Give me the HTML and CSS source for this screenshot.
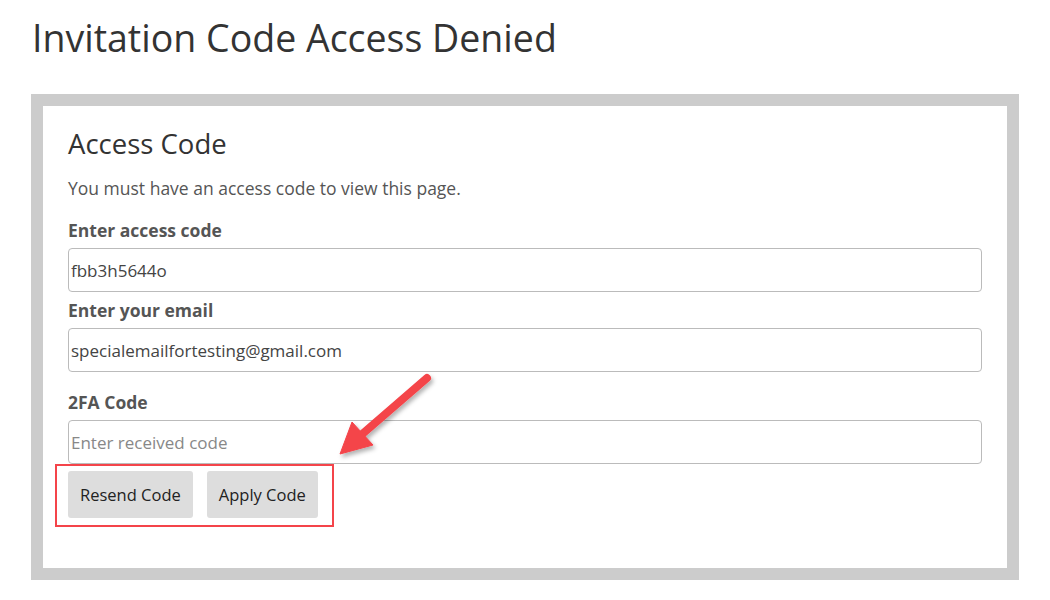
FILE: index.html
```html
<!DOCTYPE html>
<html>
<head>
  <meta charset="utf-8">
  <title>Invitation Code Access Denied</title>
  <link rel="stylesheet" href="styles.css">
</head>
<body>
  <h1 class="page-title">Invitation Code Access Denied</h1>

  <div class="access-box">
    <h2 class="box-title">Access Code</h2>
    <p class="box-note">You must have an access code to view this page.</p>

    <form class="access-form" onsubmit="return false;">
      <label class="field-label" for="code">Enter access code</label>
      <input class="field-input" type="text" id="code" value="fbb3h5644o">

      <label class="field-label" for="email">Enter your email</label>
      <input class="field-input" type="text" id="email" value="specialemailfortesting@gmail.com">

      <label class="field-label label-2fa" for="twofa">2FA Code</label>
      <input class="field-input" type="text" id="twofa" placeholder="Enter received code">

      <div class="button-row">
        <button type="button" class="btn">Resend Code</button>
        <button type="submit" class="btn">Apply Code</button>
      </div>
    </form>
  </div>

  <!-- annotation overlay -->
  <div class="mark-box"></div>
  <svg class="mark-arrow" width="120" height="110" viewBox="0 0 120 110">
    <defs>
      <filter id="shadow" x="-20%" y="-20%" width="140%" height="140%">
        <feDropShadow dx="2" dy="3" stdDeviation="2" flood-color="#000" flood-opacity="0.3"/>
      </filter>
    </defs>
    <g filter="url(#shadow)" fill="#f4444a" stroke="#f4444a">
      <line x1="95" y1="10" x2="28" y2="68" stroke-width="8" stroke-linecap="round"/>
      <polygon points="8,86 20,54 41,77" stroke-width="1" stroke-linejoin="round"/>
    </g>
  </svg>
</body>
</html>
```

FILE: styles.css
```css
body {
  margin: 0;
  padding: 0 31px;
  font-family: "Open Sans", "Noto Sans", sans-serif;
  color: #333;
  background: #fff;
}

.page-title {
  font-size: 37.5px;
  font-weight: 400;
  line-height: 52px;
  margin: 12px 0 30px 1px;
  color: #333;
}

.access-box {
  box-sizing: border-box;
  width: 988px;
  border: 12px solid #ccc;
  padding: 20px 25px 50px;
  background: #fff;
}

.box-title {
  font-size: 27.5px;
  font-weight: 400;
  line-height: 36px;
  margin: 0;
  color: #333;
}

.box-note {
  font-size: 17.5px;
  line-height: 24px;
  color: #555;
  margin: 14px 0 18px;
}

.access-form {
  display: flex;
  flex-direction: column;
}

.field-label {
  font-size: 17.5px;
  font-weight: 700;
  line-height: 24px;
  color: #555;
  margin-bottom: 6px;
}

.label-2fa {
  margin-top: 12px;
}

.field-input {
  box-sizing: border-box;
  height: 44px;
  padding: 0 2px;
  border: 1px solid #bbb;
  border-radius: 4px;
  font-family: inherit;
  font-size: 17px;
  color: #444;
  margin-bottom: 6px;
}

.field-input::placeholder {
  color: #888;
}

.button-row {
  display: flex;
  gap: 14px;
  margin-top: 1px;
}

.btn {
  height: 47px;
  padding: 0 12px;
  border: none;
  border-radius: 3px;
  background: #ddd;
  font-family: inherit;
  font-size: 16.5px;
  color: #222;
}

.mark-box {
  position: absolute;
  left: 55px;
  top: 464px;
  width: 275px;
  height: 59px;
  border: 2.5px solid #f4444a;
}

.mark-arrow {
  position: absolute;
  left: 332px;
  top: 368px;
}
```
